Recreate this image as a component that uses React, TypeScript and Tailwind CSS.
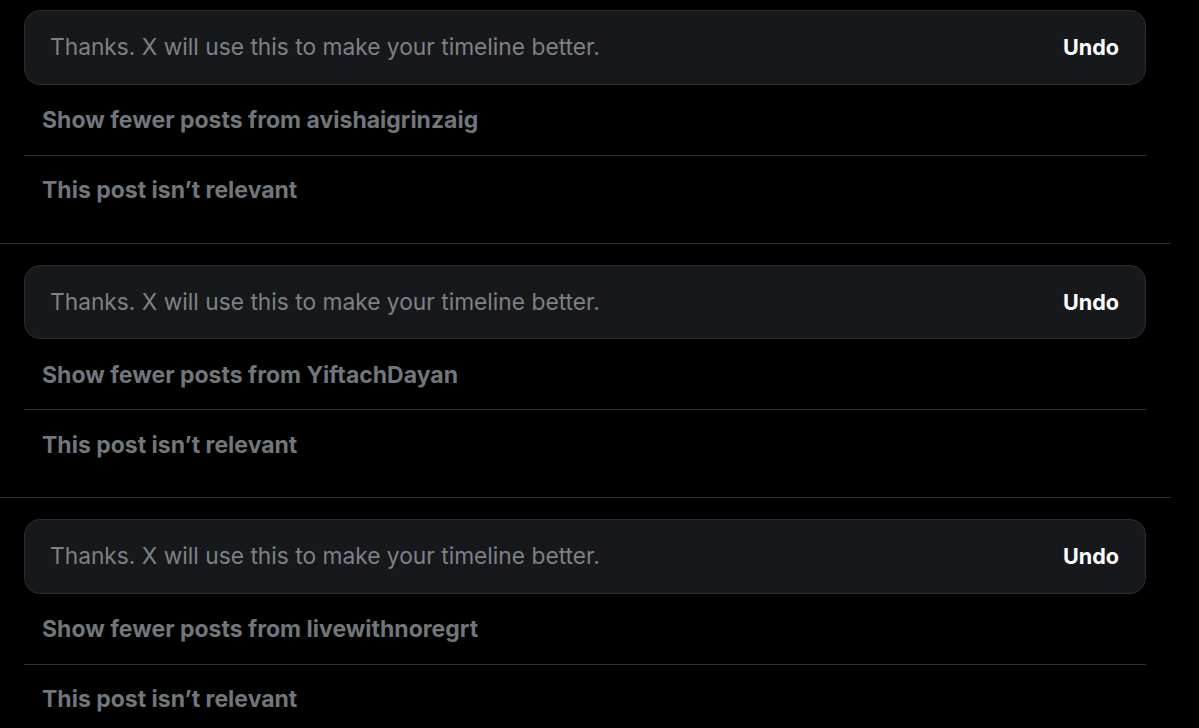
const rows = ["avishaigrinzaig", "YiftachDayan", "livewithnoregrt"];

function Feedback({ user, first }: { user: string; first: boolean }) {
  return (
    <section
      className={`w-[1171px] border-b border-[#2f3336] pb-[19px] ${
        first ? "pt-[10px]" : "pt-[21px]"
      }`}
    >
      <div className="ml-[24px] w-[1122px]">
        <div className="flex h-[74.5px] items-center justify-between rounded-[16px] border border-[#2a2d31] bg-[#16181c] pl-[25px] pr-[26px]">
          <span className="text-[22.75px] text-[#7d8186]">
            Thanks. X will use this to make your timeline better.
          </span>
          <span className="text-[21.6px] font-bold text-white">Undo</span>
        </div>
        <div className="flex h-[71px] items-center border-b border-[#2f3336] pl-[18px] pt-[2px] text-[23px] font-bold text-[#71767b]">
          Show fewer posts from {user}
        </div>
        <div className="flex h-[68px] items-center pl-[18px] pt-[2px] text-[23px] font-bold text-[#71767b]">
          This post isn’t relevant
        </div>
      </div>
    </section>
  );
}

export default function App() {
  return (
    <div
      className="h-[728px] w-[1199px] overflow-hidden bg-black"
      style={{ fontFamily: "Inter, 'Noto Sans', sans-serif" }}
    >
      {rows.map((u, i) => (
        <Feedback key={u} user={u} first={i === 0} />
      ))}
    </div>
  );
}
